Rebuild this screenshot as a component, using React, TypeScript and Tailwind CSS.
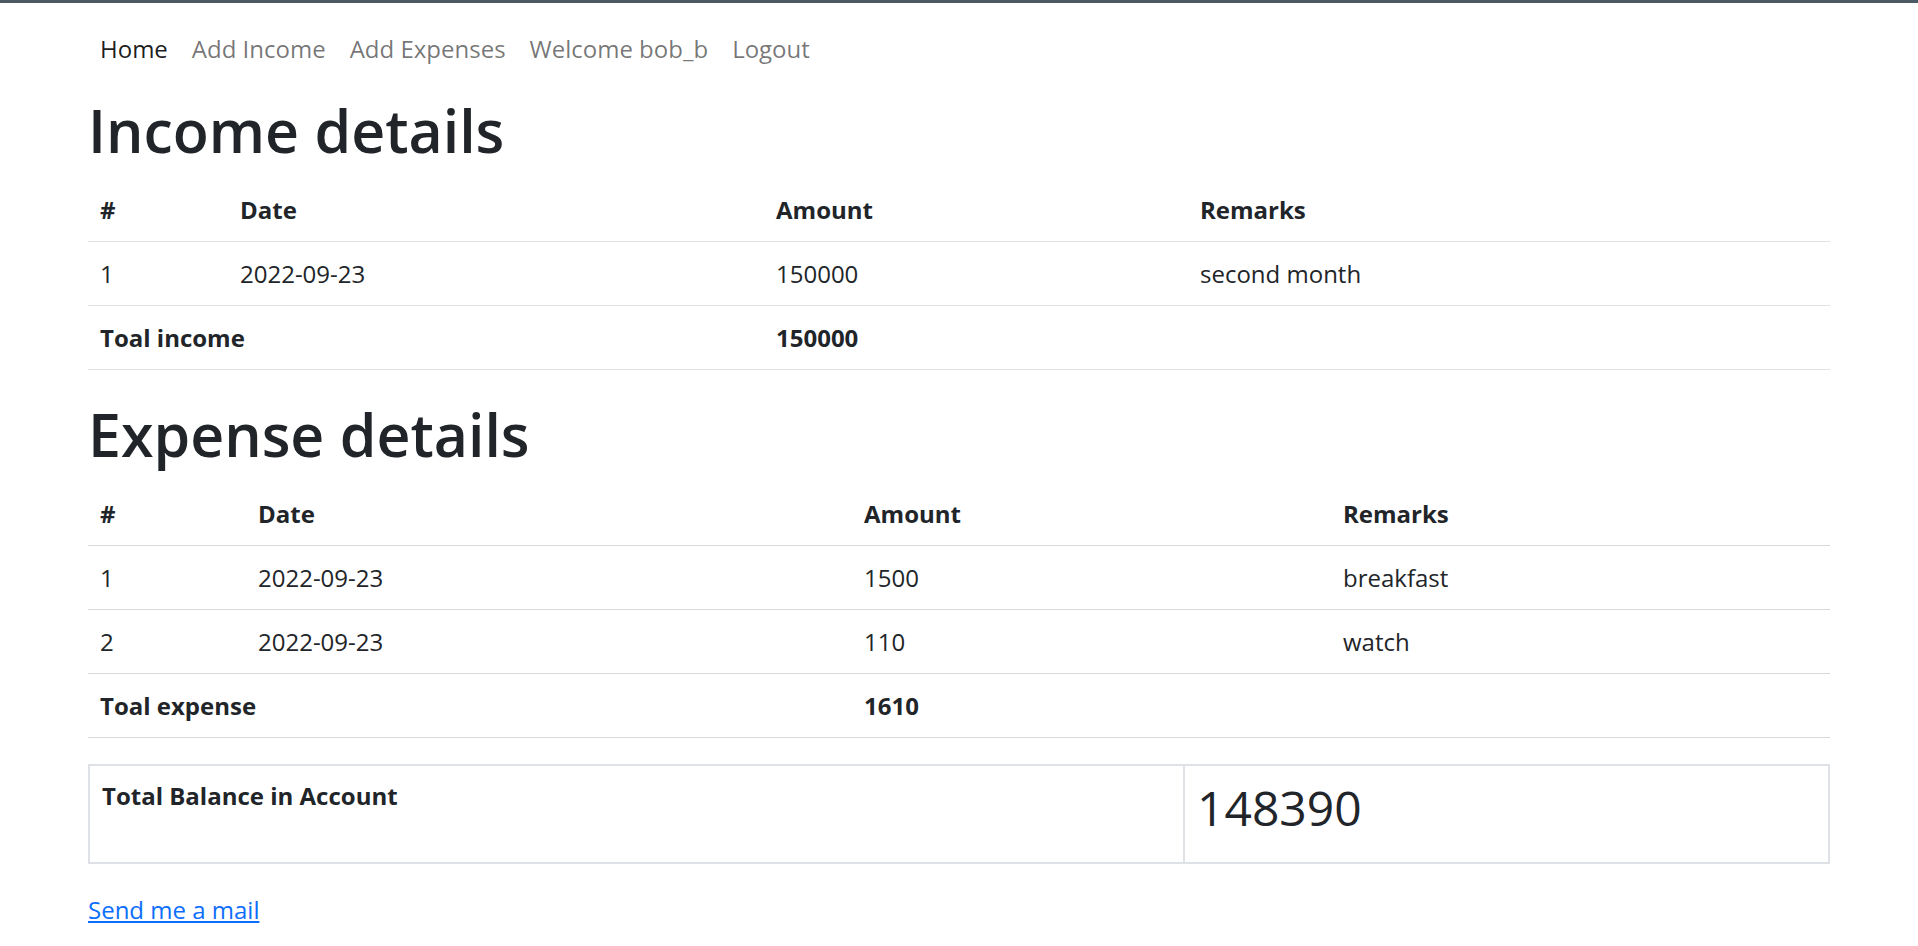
import { FC } from 'react';

interface Row {
  id: number;
  date: string;
  amount: number;
  remarks: string;
}

const incomes: Row[] = [{ id: 1, date: '2022-09-23', amount: 150000, remarks: 'second month' }];

const expenses: Row[] = [
  { id: 1, date: '2022-09-23', amount: 1500, remarks: 'breakfast' },
  { id: 2, date: '2022-09-23', amount: 110, remarks: 'watch' },
];

const navItems = [
  { href: '#', text: 'Home', active: true },
  { href: '#', text: 'Add Income' },
  { href: '#', text: 'Add Expenses' },
  { href: '#', text: 'Welcome bob_b' },
  { href: '#', text: 'Logout' },
];

const cell = 'px-3 py-[13px] leading-[37px] text-left align-middle';

interface DetailsTableProps {
  title: string;
  rows: Row[];
  totalLabel: string;
  widths: string[];
  lineColor: string;
}

const DetailsTable: FC<DetailsTableProps> = ({ title, rows, totalLabel, widths, lineColor }) => {
  const total = rows.reduce((sum, r) => sum + r.amount, 0);

  return (
    <section>
      <h1 className="text-[59px] leading-[72px] font-semibold mb-[12px]">{title}</h1>
      <table className="w-full border-collapse table-fixed">
        <colgroup>
          {widths.map((w, i) => (
            <col key={i} className={w} />
          ))}
        </colgroup>
        <thead>
          <tr className={`border-b ${lineColor}`}>
            <th className={`${cell} font-bold`}>#</th>
            <th className={`${cell} font-bold`}>Date</th>
            <th className={`${cell} font-bold`}>Amount</th>
            <th className={`${cell} font-bold`}>Remarks</th>
          </tr>
        </thead>
        <tbody>
          {rows.map((r) => (
            <tr key={r.id} className={`border-b ${lineColor}`}>
              <td className={cell}>{r.id}</td>
              <td className={cell}>{r.date}</td>
              <td className={cell}>{r.amount}</td>
              <td className={cell}>{r.remarks}</td>
            </tr>
          ))}
          <tr className={`border-b ${lineColor}`}>
            <th colSpan={2} className={`${cell} font-bold`}>
              {totalLabel}
            </th>
            <th className={`${cell} font-bold`}>{total}</th>
            <td className={cell}></td>
          </tr>
        </tbody>
      </table>
    </section>
  );
};

const App: FC = () => {
  const income = incomes.reduce((s, r) => s + r.amount, 0);
  const expense = expenses.reduce((s, r) => s + r.amount, 0);

  return (
    <div
      className="min-h-screen bg-white text-[#212529] text-[24px]"
      style={{ fontFamily: '"Open Sans", "Noto Sans", sans-serif' }}
    >
      <div className="h-[3px] bg-[#4a5963]" />
      <div className="px-[88px]">
        <nav className="h-[91px] flex items-center">
          <ul className="flex items-center">
            {navItems.map(({ text, href, active }) => (
              <li key={text}>
                <a
                  href={href}
                  className={`block px-3 leading-[36px] ${active ? 'text-black/90' : 'text-black/55'}`}
                >
                  {text}
                </a>
              </li>
            ))}
          </ul>
        </nav>

        <DetailsTable
          title="Income details"
          rows={incomes}
          totalLabel="Toal income"
          widths={['w-[140px]', 'w-[536px]', 'w-[424px]', 'w-auto']}
          lineColor="border-[#e0e0e0]"
        />

        <div className="mt-[28px]">
          <DetailsTable
            title="Expense details"
            rows={expenses}
            totalLabel="Toal expense"
            widths={['w-[158px]', 'w-[606px]', 'w-[479px]', 'w-auto']}
            lineColor="border-[#d6dadf]"
          />
        </div>

        <table className="w-full border-collapse mt-[26px] table-fixed">
          <colgroup>
            <col className="w-[1095px]" />
            <col className="w-auto" />
          </colgroup>
          <tbody>
            <tr>
              <th className="border-2 border-[#dee2e6] px-3 pt-[12px] pb-[26px] align-top text-left font-bold leading-[36px]">
                Total Balance in Account
              </th>
              <td className="border-2 border-[#dee2e6] px-3 pt-[13px] pb-[25px] align-top">
                <h2 className="text-[48px] leading-[58px] font-medium">{income - expense}</h2>
              </td>
            </tr>
          </tbody>
        </table>

        <div className="mt-[28px] pb-[20px]">
          <a href="mailto:" className="text-[#0d6efd] underline leading-[36px]">
            Send me a mail
          </a>
        </div>
      </div>
    </div>
  );
};

export default App;
